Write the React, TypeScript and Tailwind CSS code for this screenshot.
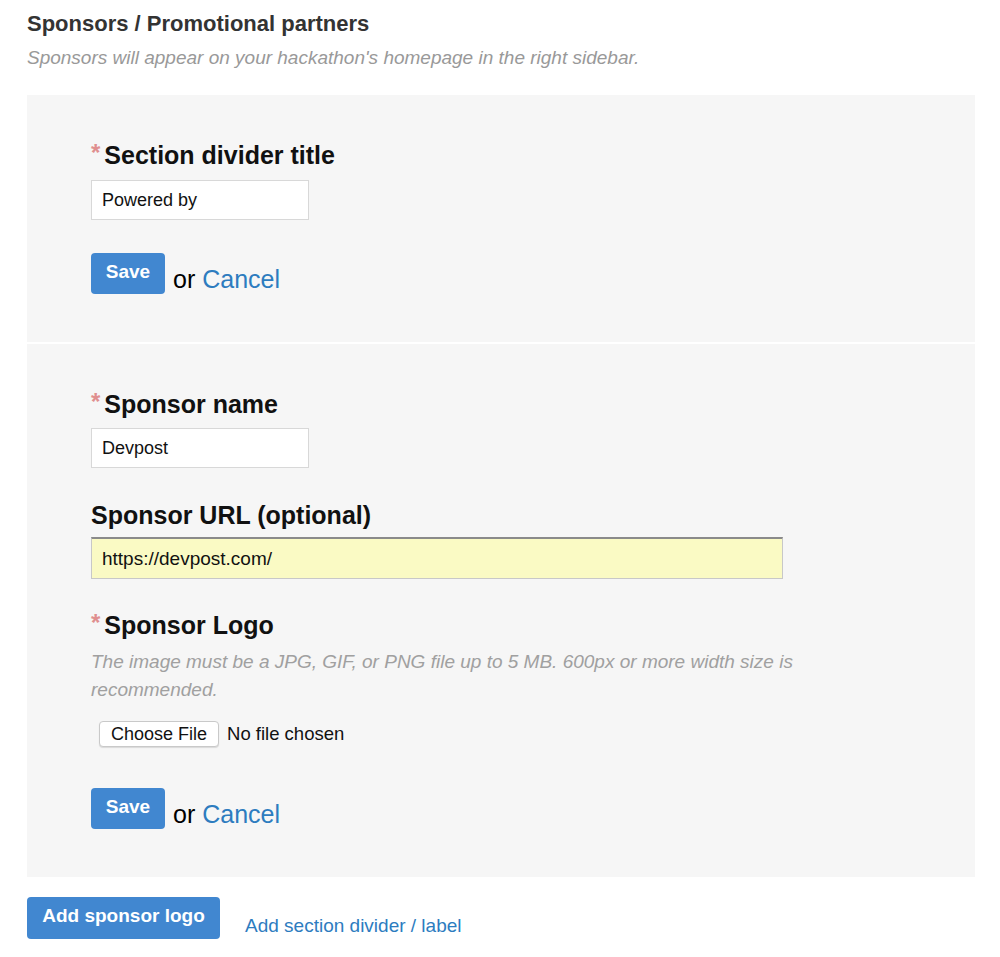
import { useState } from 'react';

function Label({ text, required = true }: { text: string; required?: boolean }) {
  return (
    <label className="flex items-start text-[25px] leading-[28px] font-bold text-[#111]">
      {required && <span className="text-[#e08f8f] text-[24px] leading-[22px] mr-[4px] mt-[1px]">*</span>}
      {text}
    </label>
  );
}

function SaveRow() {
  return (
    <div className="flex items-end">
      <button className="h-[41px] w-[74px] rounded-[4px] bg-[#4187d0] text-white text-[19px] font-bold pb-[3px]">
        Save
      </button>
      <span className="ml-[8px] mb-[1px] text-[25px] leading-[28px] text-black">
        or <a className="text-[#2d7cbf] cursor-pointer">Cancel</a>
      </span>
    </div>
  );
}

export default function App() {
  const [title, setTitle] = useState('Powered by');
  const [name, setName] = useState('Devpost');
  const [url, setUrl] = useState('https://devpost.com/');

  return (
    <div className="min-h-[957px] bg-white px-[27px] pt-[11px] font-['Liberation_Sans',Arial,sans-serif]">
      <h2 className="text-[22px] leading-[26px] font-bold text-[#333]">Sponsors / Promotional partners</h2>
      <p className="mt-[9px] text-[19px] leading-[24px] italic text-[#999]">
        Sponsors will appear on your hackathon's homepage in the right sidebar.
      </p>

      <div className="mt-[25px] w-[948px]">
        {/* Section divider */}
        <div className="bg-[#f6f6f6] pl-[64px] pt-[46px] pb-[48px]">
          <Label text="Section divider title" />
          <input
            value={title}
            onChange={(e) => setTitle(e.target.value)}
            className="mt-[11px] block h-[40px] w-[218px] border border-[#d8d8d8] bg-white px-[10px] text-[18px] text-[#111] outline-none"
          />
          <div className="mt-[33px]">
            <SaveRow />
          </div>
        </div>

        <div className="h-[2px] bg-white" />

        {/* Sponsor */}
        <div className="bg-[#f6f6f6] pl-[64px] pt-[46px] pb-[48px]">
          <Label text="Sponsor name" />
          <input
            value={name}
            onChange={(e) => setName(e.target.value)}
            className="mt-[10px] block h-[40px] w-[218px] border border-[#d8d8d8] bg-white px-[10px] text-[18px] text-[#111] outline-none"
          />

          <div className="mt-[33px]">
            <Label text="Sponsor URL (optional)" required={false} />
          </div>
          <input
            value={url}
            onChange={(e) => setUrl(e.target.value)}
            className="mt-[8px] block h-[42px] w-[692px] border border-[#c8c8c8] border-t-[2px] border-t-[#8a8a8a] bg-[#fafac4] px-[10px] text-[19px] text-[#111] outline-none"
          />

          <div className="mt-[32px]">
            <Label text="Sponsor Logo" />
          </div>
          <p className="mt-[9px] w-[720px] text-[19px] leading-[28px] italic text-[#a0a0a0]">
            The image must be a JPG, GIF, or PNG file up to 5 MB. 600px or more width size is recommended.
          </p>
          <div className="mt-[16px] ml-[8px] flex items-center text-[18px] text-[#111]">
            <button className="h-[26px] rounded-[4px] border border-[#c9c9c9] bg-white px-[11px] text-[18px] leading-[22px] shadow-[0_1px_1px_rgba(0,0,0,0.12)]">
              Choose File
            </button>
            <span className="ml-[8px] text-[18.5px]">No file chosen</span>
          </div>

          <div className="mt-[40px]">
            <SaveRow />
          </div>
        </div>
      </div>

      <div className="mt-[19px] flex items-center">
        <button className="h-[42px] w-[193px] rounded-[4px] bg-[#4187d0] text-white text-[19px] font-bold pb-[4px]">
          Add sponsor logo
        </button>
        <a className="ml-[25px] mt-[16px] text-[19px] text-[#2d7cbf] cursor-pointer">Add section divider / label</a>
      </div>
    </div>
  );
}
